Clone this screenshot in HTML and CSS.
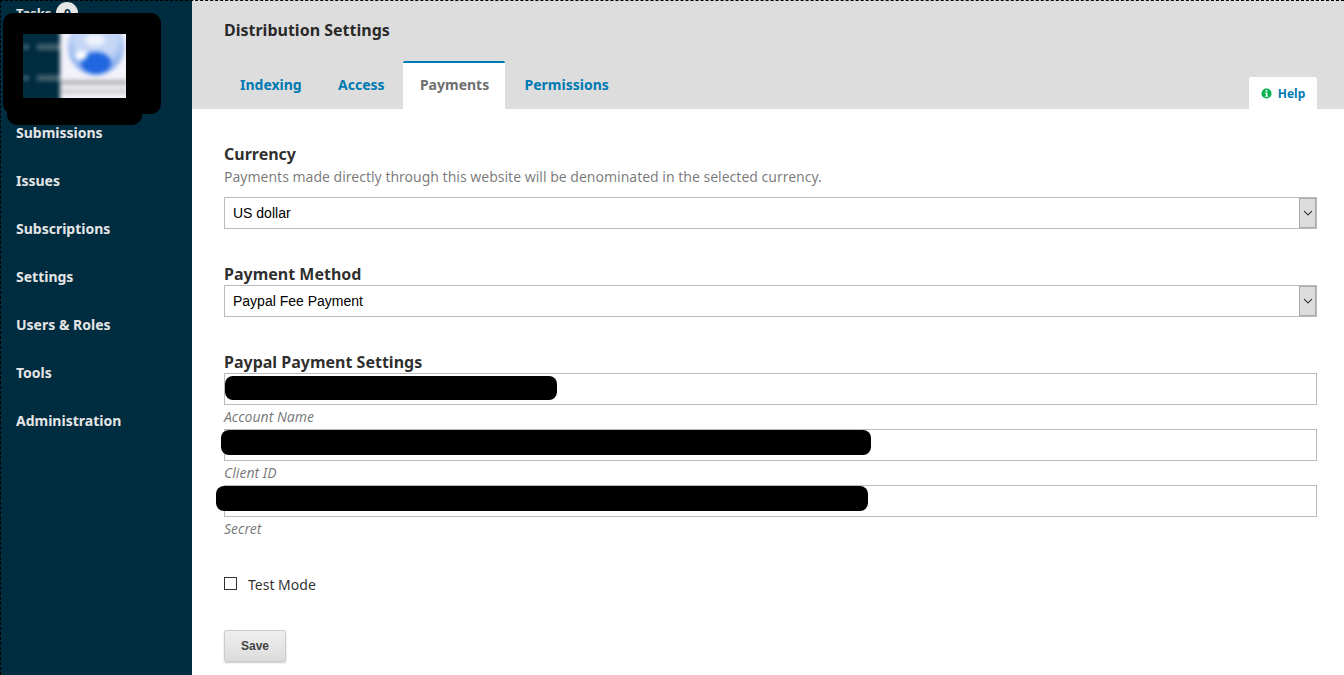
FILE: index.html
```html
<!DOCTYPE html>
<html lang="en">
<head>
<meta charset="utf-8">
<title>Distribution Settings</title>
<link rel="stylesheet" href="styles.css">
</head>
<body>
<div class="app">
  <aside class="sidebar">
    <div class="tasks"><span>Tasks</span><span class="badge">0</span></div>
    <nav class="nav">
      <a>Submissions</a>
      <a>Issues</a>
      <a>Subscriptions</a>
      <a>Settings</a>
      <a>Users &amp; Roles</a>
      <a>Tools</a>
      <a>Administration</a>
    </nav>
    <div class="redact-logo-back"></div>
    <div class="redact-logo-front"></div>
    <div class="logo-blur">
      <div class="blur-inner">
        <i class="dot d1"></i><i class="dot d2"></i>
        <i class="bl b1"></i><i class="bl b2"></i>
        <i class="paper"></i><i class="globe"></i><i class="globe-core"></i><i class="glint"></i><i class="glint g2"></i><i class="caption"></i><i class="foot"></i>
      </div>
    </div>
  </aside>
  <main class="main">
    <header class="head">
      <h1>Distribution Settings</h1>
      <div class="tabs">
        <a class="tab">Indexing</a>
        <a class="tab access">Access</a>
        <a class="tab active">Payments</a>
        <a class="tab">Permissions</a>
        <a class="help">
          <svg class="help-icon" viewBox="0 0 12 12" width="11" height="11"><circle cx="6" cy="6" r="5.5" fill="#00b24e"/><rect x="5" y="2.2" width="2" height="1.7" fill="#fff"/><path d="M4.3 5h2.8v3.6h.8v1H4.3v-1h.9V6h-.9z" fill="#fff"/></svg>
          <span>Help</span>
        </a>
      </div>
    </header>
    <form class="form">
      <section class="group currency">
        <h2>Currency</h2>
        <p class="desc">Payments made directly through this website will be denominated in the selected currency.</p>
        <div class="select"><span>US dollar</span>
          <span class="arrow"><svg viewBox="0 0 10 6" width="10" height="6"><path d="M1 1l4 4 4-4" fill="none" stroke="#444" stroke-width="1.1"/></svg></span>
        </div>
      </section>
      <section class="group method">
        <h2>Payment Method</h2>
        <div class="select"><span>Paypal Fee Payment</span>
          <span class="arrow"><svg viewBox="0 0 10 6" width="10" height="6"><path d="M1 1l4 4 4-4" fill="none" stroke="#444" stroke-width="1.1"/></svg></span>
        </div>
      </section>
      <section class="group paypal">
        <h2>Paypal Payment Settings</h2>
        <div class="field"><div class="input"></div><label>Account Name</label><i class="redact r1"></i></div>
        <div class="field"><div class="input"></div><label>Client ID</label><i class="redact r2"></i></div>
        <div class="field"><div class="input"></div><label>Secret</label><i class="redact r3"></i></div>
      </section>
      <div class="check"><span class="box"></span><span>Test Mode</span></div>
      <button class="save" type="button">Save</button>
    </form>
  </main>
</div>
</body>
</html>
```
FILE: styles.css
```css
* { box-sizing: border-box; }
html, body { margin: 0; height: 675px; overflow: hidden; background: #fff; }
body { font-family: "Noto Sans", sans-serif; color: rgba(0,0,0,.84); }
.app { display: flex; width: 1344px; height: 675px; position: relative; overflow: hidden; }
.app::before {
  content: ""; position: absolute; z-index: 5; left: 0; top: 0; right: 0; bottom: 0;
  border-top: 1px dashed #000; border-left: 1px dashed #000; pointer-events: none;
}
.sidebar { width: 192px; flex: none; background: #002c40; position: relative; color: #e5e5e5; }
.tasks { display: flex; align-items: center; gap: 5px; height: 26px; padding-left: 16px; font-size: 13px; font-weight: 700; }
.badge { width: 22px; height: 22px; border-radius: 50%; background: #e5e5e5; color: #002c40; font-size: 12px; display: flex; align-items: center; justify-content: center; }
.nav { display: flex; flex-direction: column; margin-top: 83px; }
.nav a { height: 48px; padding: 0 0 2px 16px; display: flex; align-items: center; font-size: 14px; font-weight: 700; color: #e5e5e5; }
.redact-logo-back { position: absolute; left: 7px; top: 40px; width: 135px; height: 85px; background: #000; border-radius: 10px; }
.redact-logo-front { position: absolute; left: 3px; top: 13px; width: 158px; height: 101px; background: #000; border-radius: 10px; }
.logo-blur { position: absolute; left: 23px; top: 34px; width: 103px; height: 64px; overflow: hidden; background: #002c40; }
.blur-inner { position: absolute; inset: 0; filter: blur(2px); }
.blur-inner i { position: absolute; display: block; }
.dot { left: 1px; width: 4px; height: 4px; background: #6f8894; }
.d1 { top: 11px; }
.d2 { top: 42px; }
.bl { left: 14px; width: 24px; height: 6px; background: #45636f; }
.b1 { top: 10px; }
.b2 { top: 41px; }
.paper { left: 37px; top: -6px; width: 80px; height: 80px; background: #f3f2fb; }
.globe { left: 45px; top: -15px; width: 56px; height: 56px; border-radius: 50%; background: radial-gradient(circle at 50% 35%, #c5d7f5 0 45%, #7ea6ea 75%, #4f86e4 100%); }
.globe-core { left: 58px; top: 18px; width: 30px; height: 22px; border-radius: 50%; background: #1f66e0; }
.glint { left: 52px; top: 17px; width: 12px; height: 9px; border-radius: 50%; background: #fff; }
.g2 { left: 62px; top: 0; width: 20px; height: 12px; background: #eef3fc; }
.caption { left: 38px; top: 46px; width: 66px; height: 5px; background: #b5b5b5; }
.foot { left: 38px; top: 55px; width: 66px; height: 5px; background: #d0d0d0; }
.main { flex: 1; min-width: 0; }
.head { height: 109px; background: #ddd; padding-left: 32px; display: flex; flex-direction: column; }
.head h1 { margin: 0; font-size: 16px; line-height: 20px; font-weight: 700; padding-top: 20px; height: 61px; color: rgba(0,0,0,.84); }
.tabs { display: flex; gap: 4px; height: 48px; align-items: flex-end; }
.tab { height: 48px; padding: 0 16px 4px; display: flex; align-items: center; font-size: 14px; font-weight: 700; color: #007ab2; border-top: 2px solid transparent; }
.tab.active { background: #fff; color: #6f6f6f; border-top-color: #007ab2; border-radius: 2px 2px 0 0; width: 102px; justify-content: center; padding: 0 0 4px 2px; }
.tab:first-child { width: 94px; }
.tab.access { margin-right: -2px; }
.help { margin-left: auto; margin-right: 27px; width: 68px; height: 32px; background: #fff; border-radius: 2px 2px 0 0; display: flex; align-items: center; justify-content: center; gap: 6px; font-size: 12px; font-weight: 700; color: #007ab2; }
.help-icon { flex: none; }
.form { padding: 0 27px 0 32px; display: flex; flex-direction: column; align-items: stretch; }
.group { display: flex; flex-direction: column; }
.group h2 { margin: 0; font-size: 16px; line-height: 20px; font-weight: 700; }
.currency { padding-top: 35px; }
.desc { margin: 3px 0 10px; font-size: 14px; line-height: 20px; color: rgba(0,0,0,.54); }
.method { padding-top: 35px; }
.method h2 { margin-bottom: 1px; }
.paypal { padding-top: 35px; }
.paypal h2 { margin-bottom: 1px; }
.select { position: relative; height: 32px; border: 1px solid #bbb; display: flex; align-items: center; padding-left: 8px; font-family: "Liberation Sans", Arial, sans-serif; font-size: 14px; color: #000; background: #fff; }
.arrow { position: absolute; right: 0; top: 0; bottom: 0; width: 17px; background: #ddd; border: 1px solid #aaa; display: flex; align-items: center; justify-content: center; }
.field { position: relative; height: 56px; display: flex; flex-direction: column; }
.input { height: 32px; border: 1px solid #bbb; background: #fff; flex: none; }
.field label { font-size: 14px; line-height: 24px; font-style: italic; color: rgba(0,0,0,.54); }
.redact { position: absolute; display: block; background: #000; border-radius: 8px; }
.r1 { left: 1px; top: 3px; width: 332px; height: 24px; }
.r2 { left: -3px; top: 1px; width: 650px; height: 25px; }
.r3 { left: -8px; top: 1px; width: 652px; height: 25px; }
.check { display: flex; align-items: center; gap: 11px; margin-top: 31px; height: 24px; font-size: 14px; color: rgba(0,0,0,.84); }
.box { width: 13px; height: 13px; border: 1px solid #333; background: #fff; margin-top: -2px; }
.save { margin-top: 34px; width: 62px; height: 32px; border: 1px solid #ccc; border-radius: 2px; background: linear-gradient(#efefef, #dcdcdc); box-shadow: 0 1px 2px rgba(0,0,0,.2); font-family: "Liberation Sans", Arial, sans-serif; font-size: 12px; font-weight: 700; color: #444; padding: 0; }
```
